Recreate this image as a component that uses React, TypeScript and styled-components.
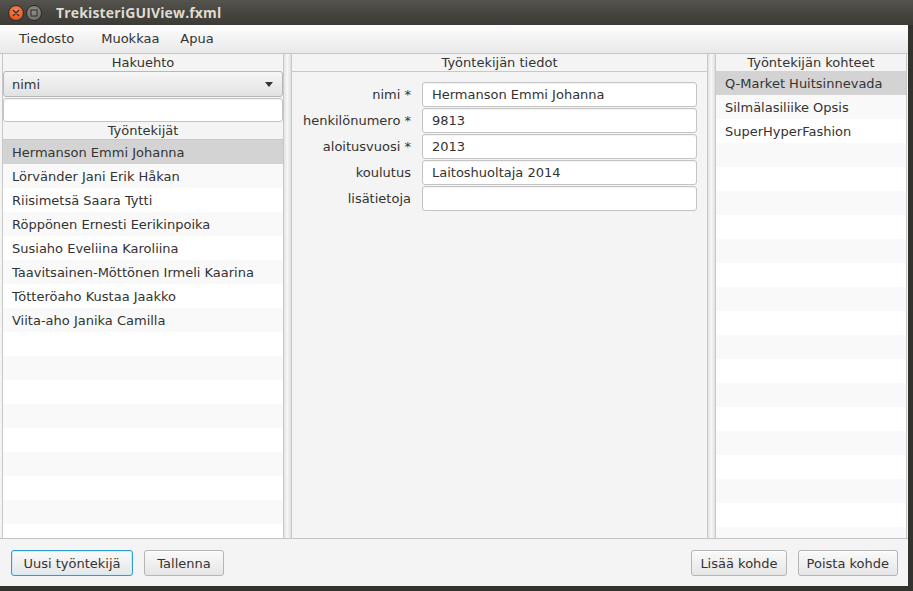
import React from "react";
import styled, { createGlobalStyle } from "styled-components";

const Global = createGlobalStyle`
  html, body { margin: 0; padding: 0; }
  body {
    background: #31302d;
    font-family: "DejaVu Sans", "Noto Sans", sans-serif;
    font-size: 13px;
    color: #333333;
  }
  * { box-sizing: border-box; }
`;

const Screen = styled.div`
  width: 913px;
  height: 591px;
  display: flex;
  flex-direction: column;
  background: #33322f;
  overflow: hidden;
`;

const TitleBar = styled.div`
  height: 25px;
  flex: none;
  display: flex;
  align-items: center;
  padding-left: 8px;
  background: linear-gradient(to bottom, #55534e 0%, #46453f 50%, #3c3b37 100%);
`;

const WinButton = styled.div<{ $close?: boolean }>`
  width: 16px;
  height: 16px;
  border-radius: 50%;
  margin-right: 2px;
  display: flex;
  align-items: center;
  justify-content: center;
  border: 1px solid #2e2d2a;
  background: ${(p) =>
    p.$close
      ? "radial-gradient(circle at 50% 35%, #f68a62 0%, #e6561f 70%, #c8461a 100%)"
      : "radial-gradient(circle at 50% 35%, #8f8d88 0%, #76746f 70%, #63615c 100%)"};
`;

const Title = styled.div`
  margin-left: 12px;
  margin-bottom: 1px;
  font-family: "Open Sans", "DejaVu Sans", sans-serif;
  font-weight: 700;
  font-size: 14px;
  color: #dfdbd2;
  letter-spacing: 0.15px;
`;

const Window = styled.div`
  width: 908px;
  height: 561px;
  flex: none;
  display: flex;
  flex-direction: column;
  background: #f4f4f4;
`;

const MenuBar = styled.div`
  height: 29px;
  flex: none;
  display: flex;
  align-items: center;
  background: linear-gradient(to bottom, #fdfdfd 0%, #f1f1f1 60%, #e9e9e9 100%);
  border-bottom: 1px solid #c6c6c6;
`;

const MenuItem = styled.div<{ $ml: number }>`
  margin-left: ${(p) => p.$ml}px;
  line-height: 20px;
  color: #333;
`;

const Split = styled.div`
  flex: 1;
  display: flex;
  padding: 0 1px 0 2px;
  border-bottom: 1px solid #c4c4c4;
  min-height: 0;
`;

const Pane = styled.div<{ $w: number }>`
  width: ${(p) => p.$w}px;
  flex: none;
  display: flex;
  flex-direction: column;
  border-left: 1px solid #c8c8c8;
  border-right: 1px solid #c8c8c8;
  min-height: 0;
  overflow: hidden;
`;

const Divider = styled.div`
  width: 7px;
  flex: none;
  background: linear-gradient(to right, #e2e2e2 0%, #f7f7f7 45%, #f3f3f3 60%, #dedede 100%);
`;

const Header = styled.div`
  height: 17px;
  flex: none;
  line-height: 17px;
  text-align: center;
  color: #333;
`;

const Combo = styled.div`
  height: 26px;
  flex: none;
  display: flex;
  align-items: center;
  justify-content: space-between;
  padding: 1px 8px 0 8px;
  border: 1px solid #b8b8b8;
  border-radius: 3px;
  background: linear-gradient(to bottom, #f6f6f6 0%, #ececec 50%, #e2e2e2 100%);
`;

const Arrow = styled.div`
  width: 0;
  height: 0;
  border-left: 4.5px solid transparent;
  border-right: 4.5px solid transparent;
  border-top: 5px solid #333;
  margin-right: 1px;
`;

const SearchField = styled.div`
  height: 24px;
  flex: none;
  margin-top: 1px;
  background: #ffffff;
  border: 1px solid #c4c4c4;
  border-radius: 3px;
  box-shadow: inset 0 1px 1px rgba(0, 0, 0, 0.06);
`;

const List = styled.div<{ $top: boolean }>`
  flex: 1;
  min-height: 0;
  background: #ffffff;
  border-top: ${(p) => (p.$top ? "1px solid #c8c8c8" : "none")};
  overflow: hidden;
`;

const Row = styled.div<{ $odd: boolean; $sel: boolean }>`
  height: 24px;
  line-height: 26px;
  overflow: hidden;
  padding-left: 9px;
  white-space: nowrap;
  color: #333;
  background: ${(p) => (p.$sel ? "#d3d3d3" : p.$odd ? "#f9f9f9" : "#ffffff")};
`;

const FormBox = styled.div`
  flex: 1;
  border-top: 1px solid #c8c8c8;
  padding: 10px 10px 0 11px;
`;

const FormGrid = styled.div`
  display: grid;
  grid-template-columns: auto 1fr;
  grid-auto-rows: 25px;
  column-gap: 11px;
  row-gap: 1px;
`;

const FieldLabel = styled.div`
  height: 25px;
  text-align: right;
  white-space: nowrap;
  line-height: 24px;
  padding-top: 1px;
  color: #333;
`;

const Field = styled.div`
  height: 25px;
  line-height: 22px;
  padding: 1px 0 0 9px;
  background: #ffffff;
  border: 1px solid #c4c4c4;
  border-radius: 3px;
  box-shadow: inset 0 1px 1px rgba(0, 0, 0, 0.05);
  color: #333;
  white-space: nowrap;
`;

const BottomBar = styled.div`
  height: 47px;
  flex: none;
  display: flex;
  justify-content: space-between;
  align-items: flex-start;
  padding: 11px 10px 0 11px;
`;

const ButtonGroup = styled.div`
  display: flex;
  gap: 11px;
`;

const Button = styled.div<{ $focused?: boolean; $min?: number }>`
  height: 26px;
  line-height: 23px;
  padding: 1px 8px 0;
  min-width: ${(p) => p.$min ?? 0}px;
  text-align: center;
  white-space: nowrap;
  color: #333;
  border-radius: 3px;
  border: 1px solid ${(p) => (p.$focused ? "#2a9fd6" : "#b5b5b5")};
  box-shadow: ${(p) =>
    p.$focused ? "inset 0 0 0 1px #cfe9f6" : "inset 0 1px 0 rgba(255,255,255,0.8)"};
  background: linear-gradient(to bottom, #fafafa 0%, #f0f0f0 50%, #e6e6e6 100%);
`;

const leftItems = [
  "Hermanson Emmi Johanna",
  "Lörvänder Jani Erik Håkan",
  "Riisimetsä Saara Tytti",
  "Röppönen Ernesti Eerikinpoika",
  "Susiaho Eveliina Karoliina",
  "Taavitsainen-Möttönen Irmeli Kaarina",
  "Tötteröaho Kustaa Jaakko",
  "Viita-aho Janika Camilla",
];

const rightItems = ["Q-Market Huitsinnevada", "Silmälasiliike Opsis", "SuperHyperFashion"];

const fields: [string, string][] = [
  ["nimi *", "Hermanson Emmi Johanna"],
  ["henkilönumero *", "9813"],
  ["aloitusvuosi *", "2013"],
  ["koulutus", "Laitoshuoltaja 2014"],
  ["lisätietoja", ""],
];

function ListRows({ items, count }: { items: string[]; count: number }) {
  return (
    <>
      {Array.from({ length: count }).map((_, i) => (
        <Row key={i} $odd={i % 2 === 1} $sel={i === 0}>
          {items[i] ?? "\u00a0"}
        </Row>
      ))}
    </>
  );
}

export default function App() {
  return (
    <>
      <Global />
      <Screen>
        <TitleBar>
          <WinButton $close>
            <svg width="8" height="8" viewBox="0 0 8 8">
              <path d="M1.5 1.5 L6.5 6.5 M6.5 1.5 L1.5 6.5" stroke="#3a2a22" strokeWidth="1.4" strokeLinecap="round" />
            </svg>
          </WinButton>
          <WinButton>
            <svg width="8" height="8" viewBox="0 0 8 8">
              <rect x="1" y="1" width="6" height="6" fill="none" stroke="#3c3b37" strokeWidth="1.2" />
            </svg>
          </WinButton>
          <Title>TrekisteriGUIView.fxml</Title>
        </TitleBar>
        <Window>
          <MenuBar>
            <MenuItem $ml={19}>Tiedosto</MenuItem>
            <MenuItem $ml={27}>Muokkaa</MenuItem>
            <MenuItem $ml={21}>Apua</MenuItem>
          </MenuBar>
          <Split>
            <Pane $w={282}>
              <Header>Hakuehto</Header>
              <Combo>
                <span>nimi</span>
                <Arrow />
              </Combo>
              <SearchField />
              <Header>Työntekijät</Header>
              <List $top>
                <ListRows items={leftItems} count={18} />
              </List>
            </Pane>
            <Divider />
            <Pane $w={417}>
              <Header>Työntekijän tiedot</Header>
              <FormBox>
                <FormGrid>
                  {fields.map(([l, v]) => (
                    <React.Fragment key={l}>
                      <FieldLabel>{l}</FieldLabel>
                      <Field>{v}</Field>
                    </React.Fragment>
                  ))}
                </FormGrid>
              </FormBox>
            </Pane>
            <Divider />
            <Pane $w={192}>
              <Header>Työntekijän kohteet</Header>
              <List $top={false}>
                <ListRows items={rightItems} count={20} />
              </List>
            </Pane>
          </Split>
          <BottomBar>
            <ButtonGroup>
              <Button $focused $min={122}>Uusi työntekijä</Button>
              <Button $min={80}>Tallenna</Button>
            </ButtonGroup>
            <ButtonGroup>
              <Button>Lisää kohde</Button>
              <Button>Poista kohde</Button>
            </ButtonGroup>
          </BottomBar>
        </Window>
      </Screen>
    </>
  );
}
